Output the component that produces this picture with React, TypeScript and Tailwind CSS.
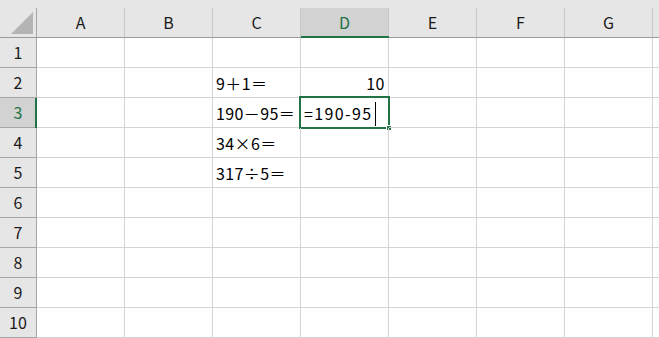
import React from "react";

const cols = ["A", "B", "C", "D", "E", "F", "G", "H"];
const rows = [1, 2, 3, 4, 5, 6, 7, 8, 9, 10];

const cellText: Record<string, string> = {
  C2: "9＋1＝",
  C3: "190－95＝",
  C4: "34×6＝",
  C5: "317÷5＝",
};

export default function App() {
  const font = { fontFamily: '"Noto Sans CJK JP", "Noto Sans", sans-serif' };
  return (
    <div className="w-[659px] h-[338px] overflow-hidden bg-white relative" style={font}>
      {/* header row */}
      <div className="flex h-[38px] bg-[#e6e6e6] border-b border-[#9b9b9b]">
        <div className="w-[37px] shrink-0 flex flex-col">
          <div className="h-[8px]" />
          <div className="flex-1 border-r border-[#a6a6a6] relative">
            <svg className="absolute left-[11px] top-[4px]" width="22" height="22" viewBox="0 0 22 22">
              <polygon points="22,0 22,22 0,22" fill="#b4b4b4" />
            </svg>
          </div>
        </div>
        {cols.map((c) => {
          const sel = c === "D";
          return (
            <div key={c} className="w-[88px] shrink-0 flex flex-col">
              <div className="h-[8px]" />
              <div
                className={
                  "flex-1 flex items-center justify-center text-[16px] leading-none border-r border-[#c8c8c8] relative " +
                  (sel ? "bg-[#d2d2d2] text-[#217346]" : "text-[#1a1a1a]")
                }
              >
                {c !== "H" && <span className="pb-[1px]">{c}</span>}
                {sel && <div className="absolute left-0 right-[-1px] bottom-[-1px] h-[2px] bg-[#217346]" />}
              </div>
            </div>
          );
        })}
      </div>
      {rows.map((r) => {
        const selRow = r === 3;
        return (
          <div key={r} className="flex h-[30px]">
            <div
              className={
                "w-[37px] shrink-0 flex items-center justify-center text-[16px] leading-none border-b border-r border-[#a6a6a6] relative " +
                (selRow ? "bg-[#d2d2d2] text-[#217346]" : "bg-[#e6e6e6] text-[#1a1a1a]")
              }
            >
              <span className="pb-[1px]">{r}</span>
              {selRow && <div className="absolute top-0 bottom-[-1px] right-[-1px] w-[2px] bg-[#217346]" />}
            </div>
            {cols.map((c) => {
              const key = c + r;
              const txt = cellText[key];
              const active = key === "D3";
              return (
                <div
                  key={c}
                  className="w-[88px] shrink-0 border-b border-r border-[#d4d4d4] relative flex items-end text-[16px] leading-[20px] text-[#000] whitespace-nowrap"
                >
                  {txt && <span className="pl-[3px] pb-[4px] tracking-[0.4px]">{txt}</span>}
                  {key === "D2" && <span className="ml-auto pr-[3px] pb-[4px] tracking-[0.5px]">10</span>}
                  {active && (
                    <>
                      <span className="pl-[3px] pb-[4px] tracking-[1.4px]">=190-95</span>
                      <span className="absolute left-[74px] top-[4px] w-[1px] h-[24px] bg-black" />
                      <div className="absolute left-[-2px] top-[-2px] w-[91px] h-[33px] border-2 border-[#217346]" />
                      <div className="absolute left-[85px] top-[27px] w-[6px] h-[6px] bg-[#217346] border border-white" />
                    </>
                  )}
                </div>
              );
            })}
          </div>
        );
      })}
    </div>
  );
}
